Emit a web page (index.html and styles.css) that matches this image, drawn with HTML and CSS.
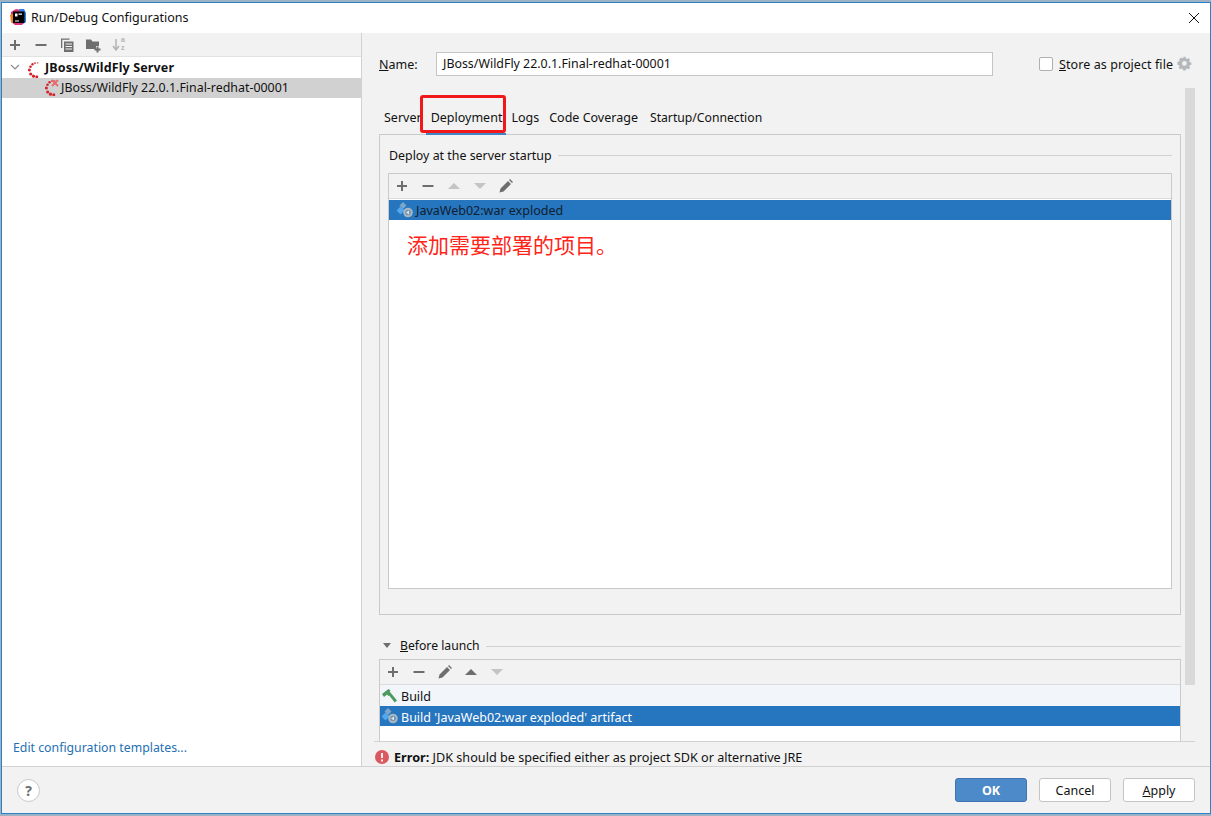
FILE: index.html
```html
<!DOCTYPE html>
<html lang="en">
<head>
<meta charset="utf-8">
<title>Run/Debug Configurations</title>
<link rel="stylesheet" href="styles.css">
</head>
<body>
<svg class="defs" width="0" height="0">
  <defs>
    <symbol id="i-plus" viewBox="0 0 16 16"><path d="M3 8h10M8 3v10" stroke="currentColor" stroke-width="2" fill="none"/></symbol>
    <symbol id="i-minus" viewBox="0 0 16 16"><path d="M2.500 8h11" stroke="currentColor" stroke-width="2" fill="none"/></symbol>
    <symbol id="i-up" viewBox="0 0 16 16"><path d="M2 11 8 5l6 6z" fill="currentColor"/></symbol>
    <symbol id="i-down" viewBox="0 0 16 16"><path d="M2 5h12l-6 6z" fill="currentColor"/></symbol>
    <symbol id="i-pencil" viewBox="0 0 16 16"><path d="M1.500 14.500 2.500 10.500 10 3l3 3-7.500 7.500zM11 2l1-1 3 3-1 1z" fill="currentColor"/></symbol>
    <symbol id="i-artifact" viewBox="0 0 16 16">
      <path d="M6 0 9.500 3.500 6 7 2.500 3.500z" fill="#7fa6c9"/>
      <path d="M3.500 4.500 7.500 8.500 3.500 12.500-.5 8.500z" fill="#52a8ec"/>
      <circle cx="11" cy="10.500" r="4.800" fill="#a9b7c2"/>
      <circle cx="11" cy="10.500" r="2.800" fill="#6f93b2"/>
      <path d="M9 10.500l3-2v4z" fill="#dfe7ee"/>
    </symbol>
    <symbol id="i-jboss" viewBox="0 0 16 16">
      <g fill="#d3232c">
        <circle cx="9.700" cy="0.900" r=".7"/><circle cx="7" cy="1.100" r=".9"/><circle cx="4.500" cy="2.200" r="1.200"/>
        <circle cx="2.500" cy="4.700" r="1.300"/><circle cx="1.400" cy="8" r="1.500"/><circle cx="2.700" cy="12" r="1.600"/>
        <circle cx="5.500" cy="14.200" r="1.600"/><circle cx="8.800" cy="14.700" r="1.500"/>
      </g>
    </symbol>
  </defs>
</svg>
<div class="window">
  <header class="titlebar">
    <svg class="app-icon" viewBox="0 0 16 16" width="16" height="16">
      <path d="M1 3 6 0l5 1 4 3v8l-3 4H5l-4-3z" fill="#e0307c"/>
      <path d="M9 0h5l2 4v9l-3 2z" fill="#2f7fe8"/>
      <path d="M0 6l3-1v9l-2-1z" fill="#f58020"/>
      <rect x="3" y="2.500" width="11.500" height="11.500" fill="#000"/>
      <path d="M5 4.500h2.500v3H5zM8.500 4.500H12v1.200H8.500zM5 11.500h4v1H5z" fill="#fff"/>
    </svg>
    <span class="title">Run/Debug Configurations</span>
    <svg class="close" viewBox="0 0 12 12" width="12" height="12"><path d="M1 1l10 10M11 1 1 11" stroke="#111" stroke-width="1" fill="none"/></svg>
  </header>
  <div class="main">
    <aside class="left">
      <div class="left-tools">
        <svg class="ti c-dark"><use href="#i-plus"/></svg>
        <svg class="ti c-dark"><use href="#i-minus"/></svg>
        <svg class="ti c-dark" viewBox="0 0 16 16"><path d="M2 1.500h8.500v1.300H3.300V11H2z" fill="#6e6e6e"/><path d="M5 4.500h9.500V15H5z" fill="#6e6e6e"/><path d="M6.500 7h6.500M6.500 9.500h6.500M6.500 12h6.500" stroke="#f2f2f2" stroke-width="1"/></svg>
        <svg class="ti c-dark" viewBox="0 0 16 16"><path d="M1 2.500h5l1.500 2H14v4.500h-3v3H1z" fill="#6e6e6e"/><path d="M12.500 9.500v6M9.500 12.500h6" stroke="#6e6e6e" stroke-width="2"/></svg>
        <span class="sort">
          <svg class="ti c-light" viewBox="0 0 16 16"><path d="M5 2v10M2 9l3 4 3-4" stroke="#b4b4b4" stroke-width="1.500" fill="none"/></svg>
          <span class="sort-az"><span>a</span><span>z</span></span>
        </span>
      </div>
      <div class="tree">
        <div class="tree-row bold">
          <svg class="chev" viewBox="0 0 10 10" width="10" height="10"><path d="M1 3l4 4 4-4" stroke="#8c8c8c" stroke-width="1.200" fill="none"/></svg>
          <svg class="ico"><use href="#i-jboss"/></svg>
          <span>JBoss/WildFly Server</span>
        </div>
        <div class="tree-row child">
          <span class="ico-wrap">
            <svg class="ico"><use href="#i-jboss"/></svg>
            <svg class="err-x" viewBox="0 0 8 8" width="8" height="8"><path d="M1 1l6 6M7 1 1 7" stroke="#e66a6a" stroke-width="1.800"/></svg>
          </span>
          <span>JBoss/WildFly 22.0.1.Final-redhat-00001</span>
        </div>
      </div>
      <a class="templates">Edit configuration templates...</a>
    </aside>
    <section class="right">
      <div class="scrollbar"></div>
      <div class="name-row">
        <label class="name-label"><u>N</u>ame:</label>
        <div class="name-input">JBoss/WildFly 22.0.1.Final-redhat-00001</div>
        <span class="check"></span>
        <span class="store"><u>S</u>tore as project file</span>
        <svg class="gear" viewBox="0 0 16 16" width="16" height="16"><path d="M6.500 1h3l.4 2 1.400.6 1.700-1.100 2 2-1.100 1.700.6 1.400 2 .4v2.800l-2 .4-.6 1.400 1.100 1.700-2 2-1.700-1.100-1.400.6-.4 2h-3l-.4-2-1.400-.6-1.700 1.100-2-2 1.100-1.700-.6-1.400-2-.4V7.200l2-.4.6-1.400L1.900 3.700l2-2 1.700 1.100 1.400-.6z" transform="scale(.82) translate(1 0)" fill="#b4b8ba"/><circle cx="7.400" cy="7.400" r="2.300" fill="#f2f2f2"/></svg>
      </div>
      <nav class="tabs">
        <span class="tab">Server</span>
        <span class="tab active">Deployment</span>
        <span class="tab">Logs</span>
        <span class="tab">Code Coverage</span>
        <span class="tab startup">Startup/Connection</span>
        <span class="highlight"></span>
      </nav>
      <div class="tab-panel">
        <div class="group-title"><span>Deploy at the server startup</span><i class="rule"></i></div>
        <div class="list-box deploy">
          <div class="list-tools">
            <svg class="ti c-dark"><use href="#i-plus"/></svg>
            <svg class="ti c-dark"><use href="#i-minus"/></svg>
            <svg class="ti c-light"><use href="#i-up"/></svg>
            <svg class="ti c-light"><use href="#i-down"/></svg>
            <svg class="ti c-dark"><use href="#i-pencil"/></svg>
          </div>
          <div class="list-row selected dark-text"><svg class="ico"><use href="#i-artifact"/></svg><span>JavaWeb02:war exploded</span></div>
          <p class="note">添加需要部署的项目。</p>
        </div>
      </div>
      <div class="group-title before"><svg class="tri" viewBox="0 0 10 10" width="10" height="10"><path d="M1 3h8L5 8z" fill="#6e6e6e"/></svg><span class="before-label"><u>B</u>efore launch</span><i class="rule"></i></div>
      <div class="list-box launch">
        <div class="list-tools">
          <svg class="ti c-dark"><use href="#i-plus"/></svg>
          <svg class="ti c-dark"><use href="#i-minus"/></svg>
          <svg class="ti c-dark"><use href="#i-pencil"/></svg>
          <svg class="ti c-dark"><use href="#i-up"/></svg>
          <svg class="ti c-light"><use href="#i-down"/></svg>
        </div>
        <div class="list-row tinted"><svg class="ico" viewBox="0 0 16 16"><path d="M0 6 6.500 1l2 1.500L7.500 4l1.500 1.500L6.500 8 5 6.500 2 9z" fill="#4d9a5f"/><path d="M6 6 8 4l7 8.500-2.300 2z" fill="#4d9a5f"/></svg><span>Build</span></div>
        <div class="list-row selected"><svg class="ico"><use href="#i-artifact"/></svg><span>Build 'JavaWeb02:war exploded' artifact</span></div>
      </div>
      <div class="error-row">
        <svg class="err" viewBox="0 0 14 14" width="14" height="14"><circle cx="7" cy="7" r="7" fill="#db5860"/><path d="M7 3v5M7 9.500v2" stroke="#fff" stroke-width="1.800"/></svg>
        <span><b>Error:</b> JDK should be specified either as project SDK or alternative JRE</span>
      </div>
    </section>
  </div>
  <footer class="footer">
    <span class="help">?</span>
    <span class="spacer"></span>
    <button class="btn primary">OK</button>
    <button class="btn">Cancel</button>
    <button class="btn"><u>A</u>pply</button>
  </footer>
</div>
</body>
</html>
```
FILE: styles.css
```css
* { box-sizing: border-box; }
html, body { margin: 0; padding: 0; }
body {
  width: 1211px;
  height: 816px;
  overflow: hidden;
  background: #9db2c4;
  font-family: "Noto Sans", "Noto Sans CJK SC", sans-serif;
  font-size: 12.5px;
  color: #111;
  padding-top: 2px;
}
.defs { position: absolute; }
.window {
  height: 812px;
  width: 1210px;
  margin-left: 1px;
  background: #f2f2f2;
  border: 1px solid #2f7fc4;
  display: flex;
  flex-direction: column;
}
.titlebar {
  height: 30px;
  background: #fff;
  display: flex;
  align-items: center;
  padding: 0 9px 2px 8px;
  gap: 5px;
  flex: none;
}
.app-icon { flex: none; }
.title { flex: 1; }
.close { flex: none; margin-right: 1px; margin-top: 2px; }
.main { flex: 1; display: flex; min-height: 0; }
.left {
  width: 360px;
  flex: none;
  display: flex;
  flex-direction: column;
  background: #fff;
  border-right: 1px solid #d1d1d1;
}
.left-tools {
  height: 24px;
  background: #f2f2f2;
  display: flex;
  align-items: center;
  gap: 10px;
  padding-left: 5px;
  flex: none;
  border-bottom: 1px solid #e2e2e2;
}
.ti { width: 16px; height: 16px; flex: none; }
.c-dark { color: #6e6e6e; }
.c-light { color: #c4c4c4; }
.sort { position: relative; display: flex; }
.sort-az {
  position: absolute;
  left: 10px;
  top: -1px;
  display: flex;
  flex-direction: column;
  font-family: "Liberation Sans", sans-serif;
  font-size: 7px;
  font-weight: 700;
  line-height: 8px;
  color: #b4b4b4;
}
.tree { flex: 1; }
.tree-row {
  height: 20px;
  display: flex;
  align-items: center;
}
.tree-row.bold { font-weight: 700; padding-left: 8px; margin-bottom: 1px; letter-spacing: .13px; }
.chev { margin-right: 8px; flex: none; }
.ico { width: 16px; height: 16px; flex: none; }
.tree-row.bold .ico { margin-right: 1px; margin-top: 6px; }
.tree-row.child { background: #d1d1d1; padding: 0 0 1px 43px; font-size: 12.4px; }
.ico-wrap { position: relative; display: flex; width: 16px; height: 16px; }
.err-x { position: absolute; left: 6px; top: -1px; }
.templates { color: #2470b3; padding: 0 0 10px 11px; font-size: 12.3px; }
.right {
  flex: 1;
  min-width: 0;
  position: relative;
  padding: 19px 0 0 17px;
  display: flex;
  flex-direction: column;
}
.scrollbar {
  position: absolute;
  left: 823px;
  top: 55px;
  width: 10px;
  height: 597px;
  background: #d9d9d9;
}
.name-row { display: flex; align-items: center; height: 24px; flex: none; }
.name-label { width: 57px; }
.name-input {
  width: 557px;
  height: 24px;
  background: #fff;
  border: 1px solid #c4c4c4;
  padding: 0 6px;
  line-height: 22px;
  font-size: 12.4px;
}
.check {
  width: 14px;
  height: 14px;
  background: #fff;
  border: 1px solid #b0b0b0;
  border-radius: 2px;
  margin-left: 46px;
  margin-right: 6px;
  flex: none;
}
.store { white-space: nowrap; letter-spacing: .08px; }
.gear { margin-left: 4px; flex: none; }
.tabs {
  position: relative;
  z-index: 1;
  display: flex;
  margin: 31px 0 0 5px;
  height: 27px;
  flex: none;
  align-items: flex-start;
  gap: 10px;
}
.tab { line-height: 20px; padding: 1px 0 6px; }
.tab.startup { margin-left: 2px; font-size: 12.2px; }
.tab.active {
  height: 28px;
  border-bottom: 2px solid #4083c9;
  padding: 1px 4px 0 5px;
  margin: 0 -5px 0 -6px;
}
.highlight {
  position: absolute;
  left: 36px;
  top: -12px;
  width: 86px;
  height: 38px;
  border: 3px solid #f01818;
  border-radius: 3px;
}
.tab-panel {
  width: 802px;
  height: 481px;
  border: 1px solid #c9c9c9;
  padding: 12px 8px 0;
  flex: none;
}
.tab-panel > .group-title { padding-left: 1px; font-size: 12.4px; margin-top: -1px; }
.group-title { display: flex; align-items: center; height: 18px; gap: 6px; }
.rule { flex: 1; height: 1px; background: #d1d1d1; }
.list-box { background: #fff; border: 1px solid #c9c9c9; }
.list-box.deploy { height: 416px; margin-top: 9px; }
.list-tools {
  height: 25px;
  background: #f2f2f2;
  border-bottom: 1px solid #dcdcdc;
  display: flex;
  align-items: center;
  gap: 10px;
  padding-left: 5px;
}
.list-row {
  height: 20px;
  display: flex;
  align-items: center;
  padding-left: 2px;
  gap: 3px;
}
.launch .list-row span { padding-top: 2px; }
.deploy .list-row { padding-left: 8px; margin-top: 1px; }
.selected { background: #2675bf; color: #fff; }
.dark-text { color: #10202e; }
.tinted { background: #f2f6fa; height: 21px; }
.note {
  margin: 11px 0 0 18px;
  font-size: 21px;
  line-height: 26px;
  color: #ff2418;
  font-family: "Noto Sans CJK SC", sans-serif;
}
.before { width: 802px; margin-top: 21px; gap: 0; height: 18px; flex: none; }
.tri { margin: 0 8px 0 3px; flex: none; }
.before-label { font-size: 12.2px; }
.before .rule { margin: 2px 0 0 6px; }
.list-box.launch {
  width: 802px;
  height: 82px;
  margin-top: 5px;
  flex: none;
  border-bottom: 0;
}
.error-row {
  flex: 1;
  margin-left: -5px;
  width: 821px;
  display: flex;
  align-items: center;
  gap: 5px;
  padding: 5px 0 0 1px;
  font-size: 12.65px;
  border-top: 1px solid #d1d1d1;
}
.err { flex: none; }
.footer {
  height: 47px;
  flex: none;
  border-top: 1px solid #d1d1d1;
  display: flex;
  align-items: center;
  padding: 0 15px;
  gap: 12px;
}
.spacer { flex: 1; }
.help {
  width: 23px;
  height: 23px;
  border: 1px solid #c9c9c9;
  border-radius: 50%;
  background: #fff;
  color: #6e6e6e;
  font-weight: 700;
  font-size: 14px;
  text-align: center;
  line-height: 21px;
}
.btn {
  width: 72px;
  height: 24px;
  font: inherit;
  color: #111;
  background: #fff;
  border: 1px solid #c4c4c4;
  border-radius: 3px;
  padding: 0;
}
.btn.primary {
  background: #4d8aca;
  border-color: #3f74b0;
  color: #fff;
  font-weight: 700;
}
```
